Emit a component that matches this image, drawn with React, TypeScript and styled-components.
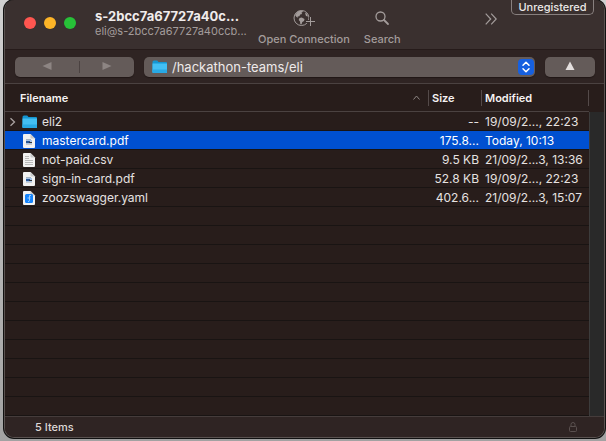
import React from "react";
import styled, { createGlobalStyle } from "styled-components";

const GlobalStyle = createGlobalStyle`
  * { box-sizing: border-box; }
  html, body, #root { height: 100%; }
  body {
    margin: 0;
    background: linear-gradient(#d0d0d0, #b4b4b4 60%, #a2a2a2);
    font-family: Inter, "Liberation Sans", sans-serif;
    font-size: 12px;
    color: #e4dfde;
  }
  button, input { font: inherit; color: inherit; }
  svg { display: block; flex: none; }
`;

const Desktop = styled.div`
  min-height: 100%;
  display: flex;
  padding: 0 1px 3px 4px;
`;

const Window = styled.main`
  flex: 1;
  min-width: 0;
  display: flex;
  flex-direction: column;
  overflow: hidden;
  background: #281d1b;
  border: 1px solid #5a5250;
  border-top: 0;
  border-radius: 10px;
  box-shadow: 0 0 0 1px #111;
`;

const TitleBar = styled.header`
  height: 49px;
  flex: none;
  display: flex;
  align-items: flex-start;
  background: #3a302f;
`;

const Lights = styled.div`
  display: flex;
  gap: 8px;
  padding: 17px 0 0 19px;
`;

const Light = styled.button<{ $color: string }>`
  width: 12px;
  height: 12px;
  padding: 0;
  border: 0;
  border-radius: 50%;
  background: ${(p) => p.$color};
`;

const Titles = styled.div`
  width: 152px;
  margin: 9px 0 0 19px;
`;

const Title = styled.h1`
  margin: 0;
  font-size: 13px;
  line-height: 15px;
  font-weight: 700;
  color: #f0ecec;
  white-space: nowrap;
`;

const Subtitle = styled.p`
  margin: 0;
  font-size: 11px;
  line-height: 14px;
  color: #a39c9b;
  white-space: nowrap;
`;

const ToolButton = styled.button<{ $gap?: number }>`
  display: flex;
  flex-direction: column;
  align-items: center;
  gap: 5px;
  margin: 9px 0 0 ${(p) => p.$gap ?? 0}px;
  padding: 0;
  border: 0;
  background: none;
  font-size: 11px;
  line-height: 14px;
  font-weight: 500;
  color: #a39c9b;
  white-space: nowrap;
`;

const MoreButton = styled.button`
  margin: 13px 14px 0 auto;
  padding: 0;
  border: 0;
  background: none;
  color: #a39c9b;
`;

const Unregistered = styled.button`
  height: 15px;
  width: 83px;
  margin-right: 10px;
  padding: 0;
  border: 1px solid #88807f;
  border-top: 0;
  border-radius: 0 0 5px 5px;
  background: none;
  font-size: 11px;
  line-height: 12px;
  font-weight: 500;
  color: #ece8e7;
`;

const NavBar = styled.nav`
  height: 35px;
  flex: none;
  display: flex;
  align-items: flex-start;
  padding: 7px 9px 0 10px;
  background: #2f2423;
  border-top: 1px solid #261b1a;
  border-bottom: 1px solid #4b4241;
`;

const History = styled.div`
  display: grid;
  grid-template-columns: 64px 55px;
  align-items: center;
  height: 20px;
  border-radius: 5px;
  background: #645b59;
  box-shadow: 0 1px 1px #211716;
`;

const HistoryButton = styled.button`
  height: 12px;
  padding: 0 0 2px;
  display: grid;
  place-items: center;
  border: 0;
  background: none;
  color: #8d8583;
  & + & { border-left: 1px solid #4b4241; }
`;

const PathBox = styled.button`
  flex: 1;
  min-width: 0;
  height: 20px;
  margin: 0 10px;
  padding: 0 1px 0 8px;
  display: flex;
  align-items: center;
  gap: 4px;
  border: 0;
  border-radius: 5px;
  background: #645b59;
  box-shadow: 0 1px 1px #211716;
  font-size: 13px;
  line-height: 16px;
  text-align: left;
  color: #eeeaea;
  span { flex: 1; padding-bottom: 1px; }
`;

const UpButton = styled.button`
  width: 50px;
  height: 20px;
  padding: 0 0 2px;
  display: grid;
  place-items: center;
  border: 0;
  border-radius: 5px;
  background: #645b59;
  box-shadow: 0 1px 1px #211716;
`;

const FileTable = styled.table`
  width: 100%;
  table-layout: fixed;
  border-collapse: separate;
  border-spacing: 0;
`;

const Col = styled.col<{ $w?: number }>`
  width: ${(p) => (p.$w ? `${p.$w}px` : "auto")};
`;

const HeadRow = styled.tr`
  height: 28px;
`;

const Head = styled.th<{ $first?: boolean; $last?: boolean }>`
  padding: 0 0 0 ${(p) => (p.$first ? 15 : 3)}px;
  font-size: 11px;
  font-weight: 600;
  text-align: left;
  color: #f6f2f2;
  border-bottom: 1px solid ${(p) => (p.$last ? "transparent" : "#4b4241")};
`;

const HeadInner = styled.div`
  height: 16px;
  display: flex;
  align-items: center;
  justify-content: space-between;
  padding-right: 8px;
  border-right: 1px solid #544a49;
`;

const Row = styled.tr<{ $selected?: boolean }>`
  height: 19px;
  color: ${(p) => (p.$selected ? "#ffffff" : "#e6e2e1")};
  td { background: ${(p) => (p.$selected ? "#0050d0" : "#281d1b")}; }
`;

const Cell = styled.td<{ $right?: boolean }>`
  height: 19px;
  padding: 2px 3px 0;
  border-bottom: 1px solid #191413;
  line-height: 16px;
  text-align: ${(p) => (p.$right ? "right" : "left")};
  white-space: nowrap;
`;

const NameCell = styled(Cell)`
  padding-left: 4px;
`;

const Name = styled.div`
  display: grid;
  grid-template-columns: 9px 16px 1fr;
  align-items: center;
  column-gap: 4px;
`;

const Track = styled.td`
  && { background: #292929; }
  padding: 0;
  border-left: 1px solid #3c3c3c;
`;

const EmptyArea = styled.div`
  flex: 1;
  display: flex;
  background: linear-gradient(to left, #292929 14px, #3c3c3c 14px 15px, transparent 15px);
`;

const Empty = styled.div`
  flex: 1;
  margin-right: 15px;
  background: repeating-linear-gradient(#281d1b 0 18px, #191413 18px 19px);
`;

const Status = styled.footer`
  height: 21px;
  flex: none;
  display: flex;
  align-items: center;
  justify-content: space-between;
  padding: 0 27px 0 30px;
  background: #2f2423;
  border-top: 1px solid #453c3b;
  font-size: 11px;
  font-weight: 500;
  color: #ddd8d7;
`;

const Folder = () => (
  <svg width="16" height="16" viewBox="0 0 16 16">
    <path d="M.5 3Q.5 1.500 2 1.500h3.200L6.500 3H14q1 0 1 1v9q0 1-1 1H1.500q-1 0-1-1z" fill="#1596d2" />
    <path d="M.5 4.500H15V13q0 1-1 1H1.500q-1 0-1-1z" fill="#43bff3" />
    <path d="M.5 10.500H15V13q0 1-1 1H1.500q-1 0-1-1z" fill="#28a9e5" />
  </svg>
);

const Doc = ({ kind }: { kind: "pdf" | "csv" | "yaml" }) => (
  <svg width="16" height="16" viewBox="0 0 16 16">
    <path d="M2 1h6.500L13 5.500V14q0 1-1 1H2q-1 0-1-1V2q0-1 1-1z" fill="#f1f1f1" />
    <path d="M8.500 1v3.500q0 1 1 1H13z" fill="#c9c9c9" />
    {kind === "pdf" && (
      <>
        <path d="M4 6h5v1H4z" fill="#a9b4c0" />
        <path d="M4 7h6v4H4z" fill="#a8c4e6" />
        <path d="M4 8h4v2H4z" fill="#2a5796" />
        <path d="M7 9h3v1H7z" fill="#333" />
        <path d="M4 11h6v1H4z" fill="#c9ccd0" />
      </>
    )}
    {kind === "csv" && (
      <path d="M3 4.500h4M3 6.500h4M3 8.500h8M3 10.500h8M3 12.500h8" stroke="#b9b9b9" />
    )}
    {kind === "yaml" && (
      <>
        <rect x="3" y="4" width="8" height="9" rx="1.500" fill="#1683fb" />
        <path d="M9 5.500H7.500v5q0 1-1.500 1M5.500 8h3" fill="none" stroke="#9fcfff" />
      </>
    )}
  </svg>
);

const trianglePaths = {
  left: "M.5 5 9.500 1v8z",
  right: "M9.500 5 .5 1v8z",
  up: "M5 .5 9.500 9h-9z",
};

const Triangle = ({ dir }: { dir: keyof typeof trianglePaths }) => (
  <svg width="10" height="10" viewBox="0 0 10 10" fill="currentColor">
    <path d={trianglePaths[dir]} />
  </svg>
);

type Entry = {
  name: string;
  kind: "folder" | "pdf" | "csv" | "yaml";
  size: string;
  modified: string;
  selected?: boolean;
};

const entries: Entry[] = [
  { name: "eli2", kind: "folder", size: "--", modified: "19/09/2..., 22:23" },
  { name: "mastercard.pdf", kind: "pdf", size: "175.8...", modified: "Today, 10:13", selected: true },
  { name: "not-paid.csv", kind: "csv", size: "9.5 KB", modified: "21/09/2...3, 13:36" },
  { name: "sign-in-card.pdf", kind: "pdf", size: "52.8 KB", modified: "19/09/2..., 22:23" },
  { name: "zoozswagger.yaml", kind: "yaml", size: "402.6...", modified: "21/09/2...3, 15:07" },
];

export default function App() {
  return (
    <>
      <GlobalStyle />
      <Desktop>
        <Window>
          <TitleBar>
            <Lights>
              <Light $color="#ff5650" aria-label="Close" />
              <Light $color="#fdb427" aria-label="Minimize" />
              <Light $color="#27c138" aria-label="Zoom" />
            </Lights>
            <Titles>
              <Title>s-2bcc7a67727a40c...</Title>
              <Subtitle>eli@s-2bcc7a67727a40ccb...</Subtitle>
            </Titles>
            <ToolButton $gap={11}>
              <svg width="22" height="18" viewBox="0 0 22 18" fill="none" stroke="currentColor">
                <circle cx="8.500" cy="9" r="7.500" />
                <path
                  d="M2 6 5 2.200l4-.7 1 1.300-1.600 1 .8 1.300-2 .4-.8 1.700-1.800.2.6 1.300L3.500 8zM6.500 9l2.200-.5 2.800 1.600-.5 2-1.700 1-.8 2.400-1.200-.5-.3-2.600-1.300-1.500zM12 4l2 .5 1 3-2-.5z"
                  fill="currentColor"
                  stroke="none"
                />
                <path d="M17.500 8v9M13 12.500h9" stroke="#3a302f" strokeWidth="3" />
                <path d="M17.500 8v9M13 12.500h9" />
              </svg>
              Open Connection
            </ToolButton>
            <ToolButton $gap={14}>
              <svg width="16" height="18" viewBox="0 0 16 18" fill="none" stroke="currentColor">
                <circle cx="6.500" cy="7.500" r="4.500" strokeWidth="1.300" />
                <path d="m10 11 4 4" strokeWidth="1.800" strokeLinecap="round" />
              </svg>
              Search
            </ToolButton>
            <MoreButton aria-label="More toolbar items">
              <svg width="12" height="12" viewBox="0 0 12 12" fill="none" stroke="currentColor" strokeWidth="1.200">
                <path d="m.7.7 5 5.300-5 5.300M6.200.7l5 5.300-5 5.300" />
              </svg>
            </MoreButton>
            <Unregistered>Unregistered</Unregistered>
          </TitleBar>
          <NavBar>
            <History>
              <HistoryButton aria-label="Back"><Triangle dir="left" /></HistoryButton>
              <HistoryButton aria-label="Forward"><Triangle dir="right" /></HistoryButton>
            </History>
            <PathBox aria-haspopup="listbox">
              <Folder />
              <span>/hackathon-teams/eli</span>
              <svg width="16" height="16" viewBox="0 0 16 16" fill="none">
                <rect width="16" height="16" rx="4" fill="#1660e0" />
                <path d="m5 6.300 3-3 3 3M5 9.700l3 3 3-3" stroke="#fff" strokeWidth="1.500" strokeLinecap="round" strokeLinejoin="round" />
              </svg>
            </PathBox>
            <UpButton aria-label="Parent folder"><Triangle dir="up" /></UpButton>
          </NavBar>
          <FileTable>
            <colgroup>
              <Col />
              <Col $w={53} />
              <Col $w={107} />
              <Col $w={15} />
            </colgroup>
            <thead>
              <HeadRow>
                <Head $first>
                  <HeadInner>
                    Filename
                    <svg width="7" height="5" viewBox="0 0 7 5" fill="none" stroke="#8d8583">
                      <path d="m.5 4.500 3-3.500 3 3.500" />
                    </svg>
                  </HeadInner>
                </Head>
                <Head><HeadInner>Size</HeadInner></Head>
                <Head><HeadInner>Modified</HeadInner></Head>
                <Head $last aria-hidden="true" />
              </HeadRow>
            </thead>
            <tbody>
              {entries.map((e) => (
                <Row key={e.name} $selected={e.selected} aria-selected={!!e.selected}>
                  <NameCell>
                    <Name>
                      {e.kind === "folder" ? (
                        <svg width="7" height="10" viewBox="0 0 7 10" fill="none" stroke="#aaa3a2" strokeWidth="1.300">
                          <path d="m1.500 1.200 4 3.800-4 3.800" />
                        </svg>
                      ) : (
                        <i />
                      )}
                      {e.kind === "folder" ? <Folder /> : <Doc kind={e.kind} />}
                      <span>{e.name}</span>
                    </Name>
                  </NameCell>
                  <Cell $right>{e.size}</Cell>
                  <Cell>{e.modified}</Cell>
                  <Track />
                </Row>
              ))}
            </tbody>
          </FileTable>
          <EmptyArea><Empty /></EmptyArea>
          <Status>
            5 Items
            <svg width="8" height="10" viewBox="0 0 8 10" fill="none" stroke="#5a504f">
              <rect x=".5" y="4.500" width="7" height="5" rx="1" />
              <path d="M2 4.500V2.500a2 2 0 0 1 4 0v2" />
            </svg>
          </Status>
        </Window>
      </Desktop>
    </>
  );
}
